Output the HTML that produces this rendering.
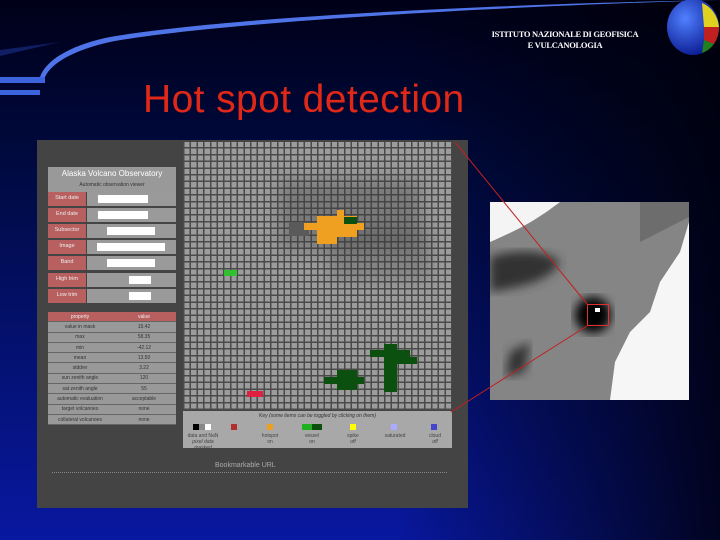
<!DOCTYPE html>
<html><head><style>
body{margin:0;width:720px;height:540px;overflow:hidden;position:relative;font-family:"Liberation Sans",sans-serif;
background:linear-gradient(180deg,#000018 0%,#000a40 30%,#0818a0 100%);}
.bg2{position:absolute;inset:0;background:linear-gradient(90deg,rgba(0,0,0,0) 0%,rgba(0,0,0,0) 55%,rgba(0,0,10,.85) 100%);}
.abs{position:absolute}
.grid{background-color:#9c9c9c;background-image:repeating-linear-gradient(90deg,#4a4a4a 0 1.5px,transparent 1.5px 6.7px),repeating-linear-gradient(0deg,#4a4a4a 0 1.5px,transparent 1.5px 6.7px);}
.row{position:absolute;left:0;width:128px;height:15px;border-bottom:1.5px solid #444;box-sizing:border-box}
.row .l{position:absolute;left:0;top:0;width:38px;height:100%;background:#b86060;color:#eee;font-size:5.5px;text-align:center;line-height:13px}
.row .r{position:absolute;left:39px;top:0;right:0;height:100%;background:#9a9a9a}
.in{position:absolute;background:#fff;height:8px;top:3px}
table{border-collapse:collapse;font-size:5px;color:#333;width:128px}
td{border-bottom:1px solid #666;text-align:center;height:9.3px;padding:0;width:50%}
.kl{position:absolute;top:22px;font-size:5px;color:#444;text-align:center;line-height:6px}
</style></head><body>
<div class="bg2"></div>
<svg class="abs" style="left:0;top:0" width="720" height="110">
<path d="M0,50 L60,42 L0,56Z" fill="#1a3090" opacity=".6"/>
<path d="M720,0 C450,8 200,25 110,42 C75,50 52,62 45,77 L40,77 C46,60 70,46 105,38 C200,20 450,5 720,0Z" fill="#4f74e8"/>
<rect x="0" y="77" width="45" height="6" fill="#3c64dc"/>
<rect x="0" y="90" width="40" height="5" fill="#3c64dc"/>
</svg>
<div class="abs" style="left:470px;top:29px;width:190px;text-align:center;color:#fff;font-family:'Liberation Serif',serif;font-size:8.5px;font-weight:bold;line-height:11px;letter-spacing:-.3px">ISTITUTO NAZIONALE DI GEOFISICA<br>E VULCANOLOGIA</div>
<svg class="abs" style="left:664px;top:0" width="56" height="56">
<defs><radialGradient id="g" cx=".35" cy=".35" r=".7"><stop offset="0" stop-color="#5080ff"/><stop offset="1" stop-color="#0a1a90"/></radialGradient></defs>
<ellipse cx="29" cy="27" rx="26" ry="28" fill="url(#g)"/>
<path d="M38,3 A26,28 0 0 1 55,27 L40,27Z" fill="#e0d020"/>
<path d="M40,27 L55,27 A26,28 0 0 1 50,44 L40,40Z" fill="#c02020"/>
<path d="M40,40 L50,44 A26,28 0 0 1 38,53Z" fill="#208020"/>
</svg>
<div class="abs" style="left:143px;top:78px;color:#e02818;font-size:39px;letter-spacing:.4px">Hot spot detection</div>

<div class="abs" style="left:37px;top:140px;width:431px;height:368px;background:#444"></div>
<div class="abs grid" style="left:183px;top:142px;width:269px;height:268px"></div>
<div class="abs" style="left:280px;top:180px;width:140px;height:70px;background:rgba(60,60,60,.35);filter:blur(8px)"></div>
<div class="abs" style="left:330px;top:230px;width:100px;height:50px;background:rgba(60,60,60,.25);filter:blur(8px)"></div>
<div class="abs" style="left:289px;top:222px;width:20px;height:14px;background:#5a5a5a"></div>
<div class="abs" style="left:317px;top:216px;width:40px;height:21px;background:#f0a020"></div>
<div class="abs" style="left:337px;top:210px;width:7px;height:7px;background:#f0a020"></div>
<div class="abs" style="left:304px;top:223px;width:60px;height:7px;background:#f0a020"></div>
<div class="abs" style="left:317px;top:237px;width:20px;height:7px;background:#f0a020"></div>
<div class="abs" style="left:344px;top:217px;width:13px;height:7px;background:#0c5010"></div>
<div class="abs" style="left:224px;top:270px;width:13px;height:6px;background:#30c030"></div>
<div class="abs" style="left:370px;top:350px;width:40px;height:7px;background:#0c5010"></div>
<div class="abs" style="left:384px;top:344px;width:13px;height:48px;background:#0c5010"></div>
<div class="abs" style="left:390px;top:357px;width:27px;height:7px;background:#0c5010"></div>
<div class="abs" style="left:324px;top:377px;width:40px;height:7px;background:#0c5010"></div>
<div class="abs" style="left:337px;top:370px;width:20px;height:20px;background:#0c5010"></div>
<div class="abs" style="left:247px;top:391px;width:16px;height:6px;background:#e02040"></div>
<div class="abs" style="left:183px;top:411px;width:269px;height:37px;background:#a8a8a8;font-size:5px;color:#333">
<div style="text-align:center;font-style:italic;margin-top:2px">Key (some items can be toggled by clicking on them)</div>
<div class="abs" style="left:10px;top:13px;width:18px;height:6px;background:linear-gradient(90deg,#000 33%,#888 33% 66%,#fff 66%)"></div>
<div class="abs" style="left:48px;top:13px;width:6px;height:6px;background:#b03030"></div>
<div class="abs" style="left:84px;top:13px;width:6px;height:6px;background:#f0a020"></div>
<div class="abs" style="left:119px;top:13px;width:20px;height:6px;background:linear-gradient(90deg,#20b020 50%,#0c5010 50%)"></div>
<div class="abs" style="left:167px;top:13px;width:6px;height:6px;background:#ff0"></div>
<div class="abs" style="left:208px;top:13px;width:6px;height:6px;background:#aaf"></div>
<div class="abs" style="left:248px;top:13px;width:6px;height:6px;background:#44c"></div>
<div class="kl" style="left:2px;width:36px">data and NaN<br><i>pixel data masked</i></div>
<div class="kl" style="left:70px;width:34px">hotspot<br>on</div>
<div class="kl" style="left:112px;width:34px">vessel<br>on</div>
<div class="kl" style="left:153px;width:34px">spike<br><i>off</i></div>
<div class="kl" style="left:190px;width:44px">saturated</div>
<div class="kl" style="left:235px;width:34px">cloud<br><i>off</i></div>
</div>
<div class="abs" style="left:215px;top:462px;color:#aaa;font-size:7px">Bookmarkable URL</div>
<div class="abs" style="left:52px;top:472px;width:395px;height:1px;border-top:1px dotted #888"></div>
<div class="abs" style="left:48px;top:167px;width:128px;height:25px;background:#999;color:#fff;font-size:8px;text-align:center;line-height:10px;padding-top:2px;box-sizing:border-box">Alaska Volcano Observatory<br><span style="font-size:5px;color:#333">Automatic observation viewer</span></div>
<div class="abs" style="left:48px;top:192px;width:128px;height:114px">
<div class="row" style="top:0"><div class="l">Start date</div><div class="r"><div class="in" style="left:11px;width:50px"></div></div></div>
<div class="row" style="top:16px"><div class="l">End date</div><div class="r"><div class="in" style="left:11px;width:50px"></div></div></div>
<div class="row" style="top:32px"><div class="l">Subsector</div><div class="r"><div class="in" style="left:20px;width:48px"></div></div></div>
<div class="row" style="top:48px"><div class="l">Image</div><div class="r"><div class="in" style="left:10px;width:68px"></div></div></div>
<div class="row" style="top:64px"><div class="l">Band</div><div class="r"><div class="in" style="left:20px;width:48px"></div></div></div>
<div class="row" style="top:81px"><div class="l">High trim</div><div class="r"><div class="in" style="left:42px;width:22px"></div></div></div>
<div class="row" style="top:97px"><div class="l">Low trim</div><div class="r"><div class="in" style="left:42px;width:22px"></div></div></div>
</div>
<div class="abs" style="left:48px;top:312px;background:#999">
<table>
<tr><td style="background:#b86060;color:#eee">property</td><td style="background:#b86060;color:#eee">value</td></tr>
<tr><td>value in mask</td><td>15.42</td></tr>
<tr><td>max</td><td>58.35</td></tr>
<tr><td>min</td><td>-42.12</td></tr>
<tr><td>mean</td><td>13.50</td></tr>
<tr><td>stddev</td><td>3.22</td></tr>
<tr><td>sun zenith angle</td><td>120</td></tr>
<tr><td>sat zenith angle</td><td>55</td></tr>
<tr><td>automatic evaluation</td><td>acceptable</td></tr>
<tr><td>target volcanoes</td><td>none</td></tr>
<tr><td>collateral volcanoes</td><td>none</td></tr>
</table></div>
<svg class="abs" style="left:490px;top:202px" width="199" height="198">
<defs><filter id="b"><feGaussianBlur stdDeviation="5"/></filter></defs>
<rect width="199" height="198" fill="#858585"/>
<path d="M0,0 L70,0 C50,15 35,25 0,40Z" fill="#f4f4f4"/>
<path d="M0,55 C30,45 60,50 70,60 C60,80 30,85 0,90Z" fill="#333" filter="url(#b)"/>
<circle cx="103" cy="113" r="18" fill="#000" filter="url(#b)"/>
<path d="M199,20 L199,198 L120,198 L125,160 L140,130 L160,110 L170,80 L190,50Z" fill="#f6f6f6"/>
<path d="M150,40 L199,15 L199,0 L150,0Z" fill="#555" opacity=".5"/>
<rect x="105" y="106" width="5" height="4" fill="#fff"/>
<path d="M20,150 L40,140 L35,170 L15,175Z" fill="#333" filter="url(#b)"/>
</svg>
<div class="abs" style="left:587px;top:304px;width:22px;height:22px;border:1px solid #e03030;box-sizing:border-box"></div>
<svg class="abs" style="left:0;top:0" width="720" height="540"><path d="M455,142 L587,304 M451,412 L587,326" stroke="#c02020" stroke-width="1"/></svg>
</body></html>
